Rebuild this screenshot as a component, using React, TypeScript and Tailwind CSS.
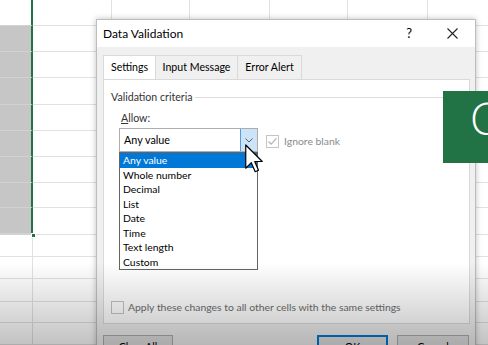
import React from "react";

const rowHeights = [26, 26, 26, 27, 26, 26, 26, 25, 27, 22, 22, 23, 21, 22, 22];
const colWidths = [33, 79, 78, 80, 78, 80, 80];

const listItems = [
  "Any value",
  "Whole number",
  "Decimal",
  "List",
  "Date",
  "Time",
  "Text length",
  "Custom",
];

const Sheet: React.FC = () => (
  <div className="flex flex-col">
    {rowHeights.map((h, r) => {
      const selected = r >= 1 && r <= 8;
      return (
        <div key={r} className="flex" style={{ height: h }}>
          {colWidths.map((w, c) => {
            let cls = "shrink-0 border-r border-b border-[#e1e1e1]";
            if (c === 0 && r === 0) {
              cls = "shrink-0 bg-white border-b border-b-[#d2d2d2] border-r-2 border-r-[#217346]";
            }
            if (c === 0 && selected) {
              cls =
                "shrink-0 bg-[#c6c6c6] border-b border-b-[#d2d2d2] border-r-2 border-r-[#217346]";
              if (r === 8) cls += " border-b-2 border-b-[#217346]";
            }
            return <div key={c} className={cls} style={{ width: w }} />;
          })}
        </div>
      );
    })}
  </div>
);

const Check: React.FC<{ checked?: boolean }> = ({ checked }) => (
  <div className="w-[13px] h-[13px] border border-[#c4c4c4] bg-white flex items-center justify-center shrink-0">
    {checked && (
      <svg width="11" height="11" viewBox="0 0 11 11">
        <path d="M1.5 5.5 L4.2 8.2 L9.5 2.2" fill="none" stroke="#b4b4b4" strokeWidth="1.2" />
      </svg>
    )}
  </div>
);

const Dialog: React.FC = () => (
  <div className="absolute left-[96px] top-[19px] w-[380px] h-[340px] bg-[#f0f0f0] border border-[#bdbdbd] shadow-[0_0_6px_rgba(0,0,0,0.25)] flex flex-col">
    <div className="h-[27px] shrink-0 bg-white flex items-center pl-[6px] text-[12px] text-black">
      <span>Data Validation</span>
      <span className="ml-auto mr-[35px] text-[13px]">?</span>
      <svg className="mr-[17px]" width="11" height="11" viewBox="0 0 11 11">
        <path d="M0.5 0.5 L10.5 10.5 M10.5 0.5 L0.5 10.5" stroke="#222" strokeWidth="1.1" />
      </svg>
    </div>
    <div className="flex flex-col px-[6px] pt-[7px]">
      <div className="flex h-[25px] text-[10.6px] text-black">
        <div className="w-[53px] bg-white border border-b-0 border-[#d9d9d9] flex items-center justify-center relative top-[1px]">
          Settings
        </div>
        <div className="w-[82px] mt-[1px] border-t border-r border-[#d9d9d9] flex items-center justify-center">
          Input Message
        </div>
        <div className="w-[64px] mt-[1px] border-t border-r border-[#d9d9d9] flex items-center justify-center">
          Error Alert
        </div>
      </div>
      <div className="relative w-[367px] h-[245px] bg-white border border-[#d9d9d9] text-[10.4px] leading-[16px]">
        <div className="flex items-center pl-[7px] mt-[9px] h-[16px]">
          <span className="text-[#333] text-[10.6px]">Validation criteria</span>
          <div className="flex-1 h-px bg-[#dcdcdc] ml-[3px] mr-[2px]" />
        </div>
        <div className="pl-[17px] mt-[5px] h-[16px] text-[#333] text-[10.6px]">
          <span className="underline">A</span>llow:
        </div>
        <div className="flex items-start pl-[15px] mt-[2px]">
          <div className="w-[139px] h-[24px] border border-[#adadad] flex">
            <div className="flex-1 flex items-center pl-[4px] text-black text-[10.8px]">Any value</div>
            <div className="w-[17px] bg-[#cce4f7] border-l border-[#569de5] flex items-center justify-center">
              <svg width="8" height="5" viewBox="0 0 8 5">
                <path d="M0.5 0.5 L4 4 L7.5 0.5" fill="none" stroke="#606060" strokeWidth="1" />
              </svg>
            </div>
          </div>
          <div className="flex items-center ml-[8px] mt-[5px] gap-[5px] text-[#8a8a8a]">
            <Check checked />
            <span>Ignore blank</span>
          </div>
        </div>
        <div className="absolute left-[15px] top-[72px] w-[139px] border border-[#646464] bg-white flex flex-col">
          {listItems.map((t, i) => (
            <div
              key={t}
              className={
                "h-[14.5px] leading-[14.5px] pl-[3px] text-[10.4px] " +
                (i === 0 ? "bg-[#0078d7] text-white" : "text-black")
              }
            >
              {t}
            </div>
          ))}
        </div>
        <div className="absolute left-[7px] top-[219px] flex items-center gap-[4px] text-[#6d6d6d] text-[10.4px]">
          <Check />
          <span>Apply these changes to all other cells with the same settings</span>
        </div>
      </div>
      <div className="flex mt-[11px] text-[10.6px] text-black">
        <div className="w-[70px] h-[26px] bg-[#e1e1e1] border border-[#adadad] flex items-center justify-center">
          Clear All
        </div>
        <div className="ml-auto w-[71px] h-[26px] bg-[#e1e1e1] border-2 border-[#0078d7] flex items-center justify-center">
          OK
        </div>
        <div className="ml-[9px] w-[72px] h-[26px] bg-[#e1e1e1] border border-[#adadad] flex items-center justify-center">
          Cancel
        </div>
      </div>
    </div>
  </div>
);

export default function App() {
  return (
    <div className="relative w-[488px] h-[345px] overflow-hidden bg-white font-['Lato','Segoe_UI',sans-serif]">
      <Sheet />
      <div className="absolute left-[31px] top-[233px] w-[5px] h-[5px] bg-[#217346] border border-white" />
      <Dialog />
      <div className="absolute left-[443px] top-[91px] w-[60px] h-[72px] bg-[#217346] overflow-hidden">
        <span className="absolute left-[27px] top-[5px] text-[44px] leading-none font-light text-white font-['Open_Sans',sans-serif]">
          C
        </span>
      </div>
      <svg className="absolute left-[245px] top-[144px]" width="18" height="29" viewBox="0 0 12 19">
        <path
          d="M0.5 0.5 L0.5 16 L4.2 12.3 L6.8 18.3 L9 17.3 L6.5 11.5 L11.5 11.5 Z"
          fill="white"
          stroke="black"
          strokeWidth="0.8"
          strokeLinejoin="round"
        />
      </svg>
      <div className="absolute inset-0 pointer-events-none bg-[linear-gradient(to_bottom,transparent_76%,rgba(0,0,0,0.24))]" />
    </div>
  );
}
